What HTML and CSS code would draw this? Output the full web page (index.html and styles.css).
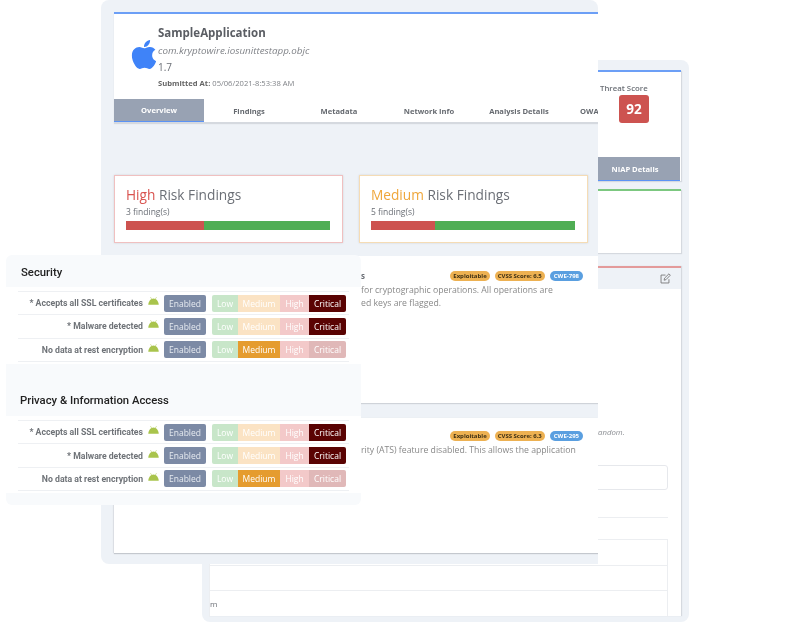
FILE: index.html
```html
<!DOCTYPE html>
<html lang="en">
<head>
    <meta charset="UTF-8">
    <title>App Security Report</title>
    <link rel="stylesheet" href="styles.css">
</head>
<body>
    <svg class="defs" width="0" height="0">
        <symbol id="android" viewBox="0 0 22 16">
            <path d="M5 0.5l2.2 3.2M17 0.5l-2.2 3.2" stroke="#a9c44c" stroke-width="1.2" fill="none"/>
            <path d="M0.5 15.5C1 8.5 5.5 3 11 3s10 5.5 10.500 12.500z" fill="#a9c44c"/>
        </symbol>
    </svg>

    <!-- Back window -->
    <section class="window window-back">
        <div class="card card-blue score-card">
            <div class="score">
                <p class="score-label">Threat Score</p>
                <div class="score-badge">92</div>
            </div>
            <div class="back-tabs"><span class="tab tab-active">NIAP Details</span></div>
        </div>
        <div class="card card-green empty-card"></div>
        <div class="card card-red detail-card">
            <div class="detail-head">
                <svg class="edit-icon" viewBox="0 0 16 16" width="11" height="11" fill="none" stroke="#777" stroke-width="1.3">
                    <path d="M13 9v5.500H1.500V3H8"/>
                    <path d="M6 10.500l.6-3L13 1.200l2 2-6.300 6.500z"/>
                </svg>
            </div>
            <div class="detail-body">
                <p class="detail-text">random.</p>
                <div class="input-box"></div>
                <div class="rule"></div>
                <div class="table">
                    <div class="table-row"></div>
                    <div class="table-row"></div>
                    <div class="table-row table-row-text">m</div>
                </div>
            </div>
        </div>
    </section>

    <!-- Front window -->
    <section class="window window-front">
        <div class="card card-blue app-card">
            <div class="app-info">
                <svg class="apple" viewBox="0 0 384 512" width="26" height="33">
                    <path fill="#3f83f8" d="M318.700 268.700c-.2-36.700 16.400-64.400 50-84.800-18.800-26.900-47.200-41.700-84.700-44.600-35.500-2.800-74.300 20.700-88.500 20.700-15 0-49.400-19.700-76.400-19.700C63.300 141.200 4 184.800 4 273.500q0 39.300 14.400 81.200c12.800 36.700 59 126.700 107.200 125.200 25.200-.6 43-17.900 75.800-17.900 31.800 0 48.300 17.900 76.400 17.900 48.600-.7 90.400-82.500 102.600-119.300-65.200-30.700-61.700-90-61.700-91.900zm-56.600-164.200c27.300-32.400 24.800-61.900 24-72.500-24.100 1.400-52 16.400-67.900 34.900-17.500 19.800-27.800 44.300-25.600 71.900 26.100 2 49.900-11.400 69.500-34.300z"/>
                </svg>
                <div class="app-text">
                    <h1 class="app-name">SampleApplication</h1>
                    <p class="app-bundle">com.kryptowire.iosunittestapp.objc</p>
                    <p class="app-version">1.7</p>
                    <p class="app-date"><b>Submitted At:</b> 05/06/2021-8:53:38 AM</p>
                </div>
            </div>
            <nav class="tabs">
                <span class="tab tab-active">Overview</span>
                <span class="tab">Findings</span>
                <span class="tab">Metadata</span>
                <span class="tab">Network Info</span>
                <span class="tab">Analysis Details</span>
                <span class="tab tab-last">OWA</span>
            </nav>
        </div>

        <div class="risk-row">
            <div class="risk risk-high">
                <h2 class="risk-title"><span class="high">High</span> Risk Findings</h2>
                <p class="risk-count">3 finding(s)</p>
                <div class="bar"><div class="bar-red" style="width: 38%"></div></div>
            </div>
            <div class="risk risk-medium">
                <h2 class="risk-title"><span class="medium">Medium</span> Risk Findings</h2>
                <p class="risk-count">5 finding(s)</p>
                <div class="bar"><div class="bar-red" style="width: 31.500%"></div></div>
            </div>
        </div>

        <div class="finding finding-one">
            <div class="finding-head">
                <b>s</b>
                <span class="pills">
                    <span class="pill pill-amber">Exploitable</span>
                    <span class="pill pill-amber">CVSS Score: 6.5</span>
                    <span class="pill pill-blue">CWE-798</span>
                </span>
            </div>
            <p class="finding-text">for cryptographic operations. All operations are<br>ed keys are flagged.</p>
        </div>
        <div class="finding finding-two">
            <div class="finding-head">
                <b></b>
                <span class="pills">
                    <span class="pill pill-amber">Exploitable</span>
                    <span class="pill pill-amber">CVSS Score: 6.3</span>
                    <span class="pill pill-blue">CWE-295</span>
                </span>
            </div>
            <p class="finding-text">rity (ATS) feature disabled. This allows the application</p>
        </div>
    </section>

    <!-- Overlay panel -->
    <section class="panel">
        <h3 class="panel-title">Security</h3>
        <div class="rows">
            <div class="row">
                <span class="row-label">* Accepts all SSL certificates</span>
                <svg class="android"><use href="#android"/></svg>
                <span class="enabled">Enabled</span>
                <span class="levels"><i class="low">Low</i><i class="med">Medium</i><i class="high-l">High</i><i class="crit on">Critical</i></span>
            </div>
            <div class="row">
                <span class="row-label">* Malware detected</span>
                <svg class="android"><use href="#android"/></svg>
                <span class="enabled">Enabled</span>
                <span class="levels"><i class="low">Low</i><i class="med">Medium</i><i class="high-l">High</i><i class="crit on">Critical</i></span>
            </div>
            <div class="row">
                <span class="row-label">No data at rest encryption</span>
                <svg class="android"><use href="#android"/></svg>
                <span class="enabled">Enabled</span>
                <span class="levels"><i class="low">Low</i><i class="med on">Medium</i><i class="high-l">High</i><i class="crit">Critical</i></span>
            </div>
        </div>

        <h3 class="panel-title panel-title-two">Privacy &amp; Information Access</h3>
        <div class="rows">
            <div class="row">
                <span class="row-label">* Accepts all SSL certificates</span>
                <svg class="android"><use href="#android"/></svg>
                <span class="enabled">Enabled</span>
                <span class="levels"><i class="low">Low</i><i class="med">Medium</i><i class="high-l">High</i><i class="crit on">Critical</i></span>
            </div>
            <div class="row">
                <span class="row-label">* Malware detected</span>
                <svg class="android"><use href="#android"/></svg>
                <span class="enabled">Enabled</span>
                <span class="levels"><i class="low">Low</i><i class="med">Medium</i><i class="high-l">High</i><i class="crit on">Critical</i></span>
            </div>
            <div class="row">
                <span class="row-label">No data at rest encryption</span>
                <svg class="android"><use href="#android"/></svg>
                <span class="enabled">Enabled</span>
                <span class="levels"><i class="low">Low</i><i class="med on">Medium</i><i class="high-l">High</i><i class="crit">Critical</i></span>
            </div>
        </div>
    </section>
</body>
</html>
```

FILE: styles.css
```css
/* Basic Reset */
* {
    box-sizing: border-box;
}

body {
    margin: 0;
    width: 800px;
    height: 624px;
    position: relative;
    overflow: hidden;
    background: #fff;
    font-family: 'Open Sans', sans-serif;
    color: #6b6f76;
}

h1, h2, h3, p {
    margin: 0;
}

.defs {
    position: absolute;
}

/* Windows */
.window {
    position: absolute;
    background: #eef2f7;
    overflow: hidden;
    filter: blur(0.35px);
}

.window-back {
    left: 202px;
    top: 60px;
    width: 487px;
    height: 562px;
    border-radius: 8px;
    padding: 10px 8px 6px 7px;
}

.window-front {
    left: 101px;
    top: 0;
    width: 497px;
    height: 564px;
    border-radius: 8px 8px 0 8px;
    padding: 12px 0 0 13px;
}

.card {
    background: #fff;
    border-top: 2px solid #6c9ff6;
}

.card-green {
    border-top-color: #7cc880;
}

.card-red {
    border-top-color: #e39a9a;
}

/* Back window */
.score-card {
    height: 111px;
    display: flex;
    flex-direction: column;
    justify-content: space-between;
    box-shadow: 1px 1px 1px #d5d9df;
}

.score {
    width: 72px;
    margin: 11px 0 0 391px;
    font-size: 7.800px;
    font-weight: 600;
    white-space: nowrap;
}

.score-badge {
    width: 30px;
    height: 28px;
    margin: 2px 0 0 19px;
    border-radius: 3px;
    background: #cd5350;
    color: #fff;
    font-size: 13.500px;
    font-weight: 700;
    display: flex;
    align-items: center;
    justify-content: center;
}

.back-tabs {
    display: flex;
    justify-content: flex-end;
    padding-right: 1px;
}

.back-tabs .tab {
    flex: 0 0 90px;
    height: 24px;
}

.empty-card {
    height: 64px;
    margin-top: 8px;
    box-shadow: 1px 1px 1px #d5d9df;
}

.detail-card {
    height: 350px;
    margin-top: 13px;
    box-shadow: 1px 0 1px #d5d9df;
}

.detail-head {
    height: 21px;
    background: #eef2f7;
    display: flex;
    justify-content: flex-end;
    align-items: center;
    padding: 0 10px;
}

.detail-body {
    padding: 0 13px 0 0;
}

.detail-text {
    margin: 137px 0 0 386px;
    height: 12px;
    font-size: 7.800px;
    font-style: italic;
    line-height: 12px;
    color: #8a8d92;
}

.input-box {
    height: 25px;
    margin-top: 27px;
    border: 1px solid #e6e8ec;
    border-radius: 3px;
}

.rule {
    height: 1px;
    margin-top: 27px;
    background: #eceef1;
}

.table {
    margin-top: 21px;
    border: 1px solid #eceef1;
    border-bottom: 0;
}

.table-row {
    height: 25.500px;
    border-bottom: 1px solid #eceef1;
    font-size: 8px;
    line-height: 26px;
}

.table-row:last-child {
    border-bottom: 0;
}

/* App header card */
.app-card {
    height: 111px;
    display: flex;
    flex-direction: column;
    justify-content: space-between;
    box-shadow: 0 1px 1px #d5d9df;
}

.app-info {
    display: flex;
    align-items: center;
    padding: 11px 0 0 17px;
}

.apple {
    margin: -6px 1px 0 0;
}

.app-name {
    font-size: 11.500px;
    font-weight: 700;
    line-height: 16px;
    color: #5a5d63;
}

.app-bundle {
    margin-top: 3px;
    font-size: 9.800px;
    font-style: italic;
    line-height: 14px;
    color: #808388;
}

.app-version {
    margin-top: 3px;
    font-size: 10px;
    line-height: 13px;
}

.app-date {
    margin-top: 4px;
    font-size: 7.600px;
    line-height: 11px;
    color: #808388;
}

.app-date b {
    font-weight: 700;
    color: #666;
}

.tabs {
    display: flex;
    border-bottom: 1px solid #d5d9df;
    height: 24px;
}

.tab {
    flex: 0 0 90px;
    font-size: 7.600px;
    font-weight: 700;
    display: flex;
    align-items: center;
    justify-content: center;
    white-space: nowrap;
    color: #666a70;
}

.tab-last {
    flex: 0 0 auto;
    margin-left: 16px;
}

.tab-active {
    background: #98a2b3;
    color: #fff;
    border-bottom: 1px solid #5b93f5;
}

/* Risk cards */
.risk-row {
    display: flex;
    gap: 16px;
    margin-top: 52px;
}

.risk {
    width: 229px;
    height: 68px;
    padding: 9px 12px 0 11px;
    background: #fff;
    box-shadow: 0 0 2px rgba(0, 0, 0, 0.12);
}

.risk-high {
    border: 1px solid #f0c0c0;
}

.risk-medium {
    border: 1px solid #f5dcb5;
}

.risk-title {
    font-size: 13.700px;
    font-weight: 400;
    line-height: 20px;
    color: #6b6f76;
}

.high {
    color: #d9534f;
}

.medium {
    color: #efa63a;
}

.risk-count {
    margin-top: 1px;
    font-size: 8.500px;
    line-height: 12px;
}

.bar {
    height: 9px;
    margin-top: 3px;
    background: #4fae54;
}

.bar-red {
    height: 100%;
    background: #cd5350;
}

/* Findings */
.finding {
    background: #fff;
    padding-left: 247px;
    padding-right: 15px;
}

.finding-one {
    height: 147px;
    margin-top: 13px;
    padding-top: 14px;
    box-shadow: 0 1px 1px #cfd3d9;
}

.finding-two {
    height: 135px;
    margin-top: 15px;
    padding-top: 13px;
    box-shadow: 0 1px 1px #c4c8ce, -1px 0 1px #e0e3e8;
}

.finding-head {
    display: flex;
    justify-content: space-between;
    align-items: center;
    font-size: 8px;
}

.pills {
    display: flex;
    gap: 5px;
}

.pill {
    height: 10px;
    padding: 0 3px;
    border-radius: 5px;
    font-size: 6px;
    font-weight: 700;
    line-height: 10px;
    white-space: nowrap;
}

.pill-amber {
    background: #edb152;
    color: #3e3014;
}

.pill-blue {
    padding: 0 4px;
    background: #5a9fe0;
    color: #fff;
}

.finding-text {
    margin-top: 3px;
    font-size: 8.700px;
    line-height: 13px;
    white-space: nowrap;
    color: #888;
}

/* Overlay panel */
.panel {
    position: absolute;
    left: 6px;
    top: 255px;
    width: 355px;
    height: 250px;
    background: #f8fafc;
    border-radius: 6px;
    font-family: Roboto, sans-serif;
    filter: blur(0.35px);
}

.panel-title {
    height: 32px;
    padding-left: 15px;
    font-size: 11.300px;
    font-weight: 500;
    line-height: 36px;
    color: #222;
}

.panel-title-two {
    height: 52.500px;
    padding: 30.500px 0 0 14px;
    line-height: 14px;
}

.rows {
    background: #fff;
    padding: 4px 12px 2px;
}

.row {
    height: 23.300px;
    display: flex;
    align-items: center;
    border-top: 1px solid #eef0f3;
}

.row:last-child {
    border-bottom: 1px solid #eef0f3;
    height: 24px;
}

.row-label {
    width: 125px;
    text-align: right;
    font-size: 8.700px;
    font-weight: 700;
    color: #6f7378;
    white-space: nowrap;
}

.android {
    width: 11px;
    height: 8px;
    margin: -4px 5px 0 5px;
    flex: none;
}

.enabled {
    width: 42px;
    height: 17px;
    border-radius: 2px;
    background: #7c8aa5;
    color: #e6eaf0;
    font-family: 'Open Sans', sans-serif;
    font-size: 8.500px;
    line-height: 17px;
    text-align: center;
}

.levels {
    display: flex;
    height: 17px;
    margin-left: 6px;
    border-radius: 2px;
    overflow: hidden;
    font-family: 'Open Sans', sans-serif;
    font-size: 8.500px;
    line-height: 17px;
    color: #fff;
    text-align: center;
}

.levels i {
    font-style: normal;
}

.low {
    width: 26px;
    background: #c8e6c9;
}

.med {
    width: 42px;
    background: #fbe3c4;
}

.med.on {
    background: #e59c2f;
}

.high-l {
    width: 29px;
    background: #f3c9c9;
}

.crit {
    width: 37px;
    background: #e0b8b8;
}

.crit.on {
    background: #5a0303;
}
```
